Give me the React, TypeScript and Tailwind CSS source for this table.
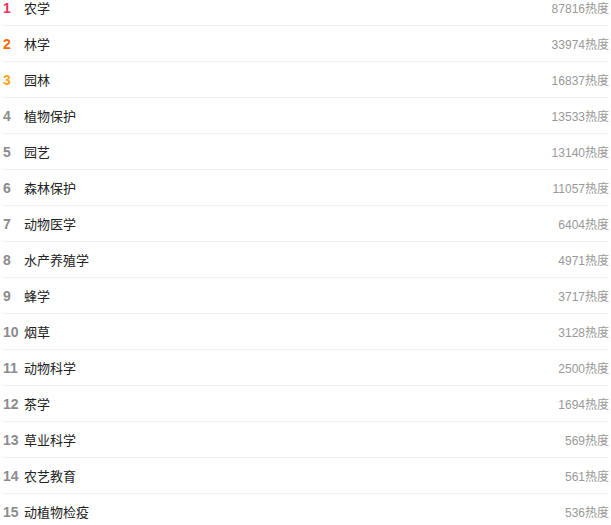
import React from "react";

const items: [string, number][] = [
  ["农学", 87816],
  ["林学", 33974],
  ["园林", 16837],
  ["植物保护", 13533],
  ["园艺", 13140],
  ["森林保护", 11057],
  ["动物医学", 6404],
  ["水产养殖学", 4971],
  ["蜂学", 3717],
  ["烟草", 3128],
  ["动物科学", 2500],
  ["茶学", 1694],
  ["草业科学", 569],
  ["农艺教育", 561],
  ["动植物检疫", 536],
];

const rankColor = (i: number) =>
  i === 0
    ? "text-[#f5325c]"
    : i === 1
    ? "text-[#ff6a00]"
    : i === 2
    ? "text-[#ffa31a]"
    : "text-[#8c8c8c]";

export default function App() {
  return (
    <div
      className="bg-white w-[611px] h-[525px] overflow-hidden"
      style={{ fontFamily: '"Liberation Sans", "Noto Sans CJK SC", sans-serif' }}
    >
      <ul className="-mt-[10px] ml-[3px] mr-[2px]">
        {items.map(([name, hot], i) => (
          <li
            key={name}
            className="h-[36px] pt-[2px] flex items-center border-b border-[#f0f0f0]"
          >
            <span className={`w-[21px] text-[14px] font-bold ${rankColor(i)}`}>
              {i + 1}
            </span>
            <span className="flex-1 text-[13px] text-[#222]">{name}</span>
            <span className="text-[12px] text-[#999]">{hot}热度</span>
          </li>
        ))}
      </ul>
    </div>
  );
}
